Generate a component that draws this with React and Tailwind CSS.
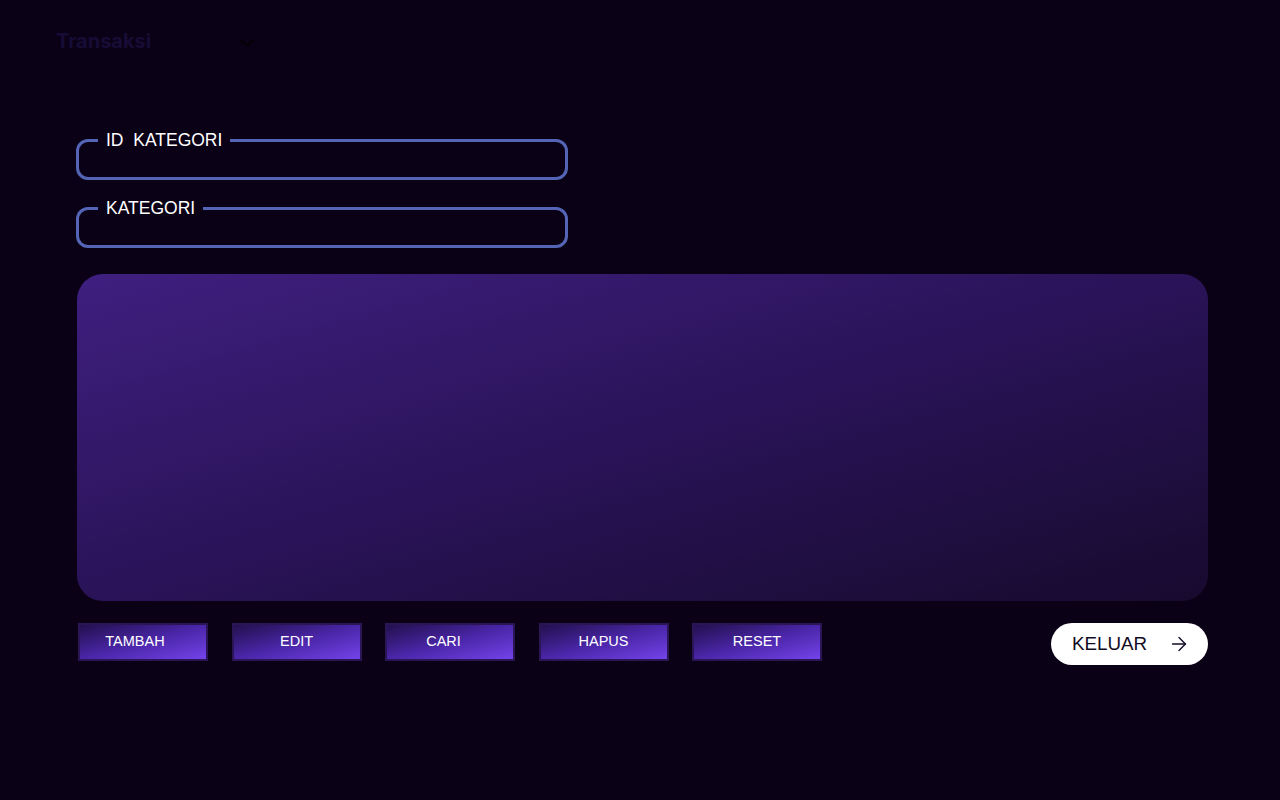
import { ChevronDown, ArrowRight } from 'lucide-react';

const actions = [
  { label: 'TAMBAH', shift: 'pr-[16px]' },
  { label: 'EDIT', shift: '' },
  { label: 'CARI', shift: 'pr-[13px]' },
  { label: 'HAPUS', shift: '' },
  { label: 'RESET', shift: '' },
];

function Field({ label }) {
  return (
    <fieldset className="h-[50px] w-[492px] rounded-[12px] border-[3px] border-[#5465b6] px-0">
      <legend className="ml-[19px] whitespace-pre px-2 text-[17.5px] leading-[20px] text-white">{label}</legend>
    </fieldset>
  );
}

export default function App() {
  return (
    <div className="min-h-[800px] w-full bg-[#0b0117] font-['Liberation_Sans',Arial,sans-serif]">
      <div className="flex h-[82px] items-start pl-[56px] pt-[28px]">
        <span className="font-['Inter',sans-serif] text-[20px] font-bold leading-[26px] text-[#170c36]">Transaksi</span>
        <ChevronDown className="ml-[84px] mt-[3px] h-6 w-6 text-[#030006]" strokeWidth={2} />
      </div>

      <div className="flex flex-col pl-[76px] pr-[72px]">
        <div className="mt-[48px] flex flex-col gap-[18px]">
          <Field label="ID  KATEGORI" />
          <Field label="KATEGORI" />
        </div>

        <div className="ml-[1px] mt-[26px] h-[327px] w-[1131px] rounded-[26px] bg-gradient-to-br from-[#3f1f80] via-[#2a1358] to-[#170a2e]" />

        <div className="ml-[2px] mt-[22px] flex items-start justify-between">
          <div className="flex gap-[23.5px]">
            {actions.map((a) => (
              <button
                key={a.label}
                className={`h-[38px] w-[130px] border-2 border-[#2a1656] bg-gradient-to-br from-[#24104f] via-[#4a26a8] to-[#7443ea] text-[14.5px] text-white ${a.shift}`}
              >
                {a.label}
              </button>
            ))}
          </div>
          <button className="flex h-[42px] w-[157px] items-center justify-between rounded-full bg-white pl-[21px] pr-[18px] text-[18.8px] text-[#120a24]">
            KELUAR
            <ArrowRight className="h-[22px] w-[22px]" strokeWidth={1.5} />
          </button>
        </div>
      </div>
    </div>
  );
}
